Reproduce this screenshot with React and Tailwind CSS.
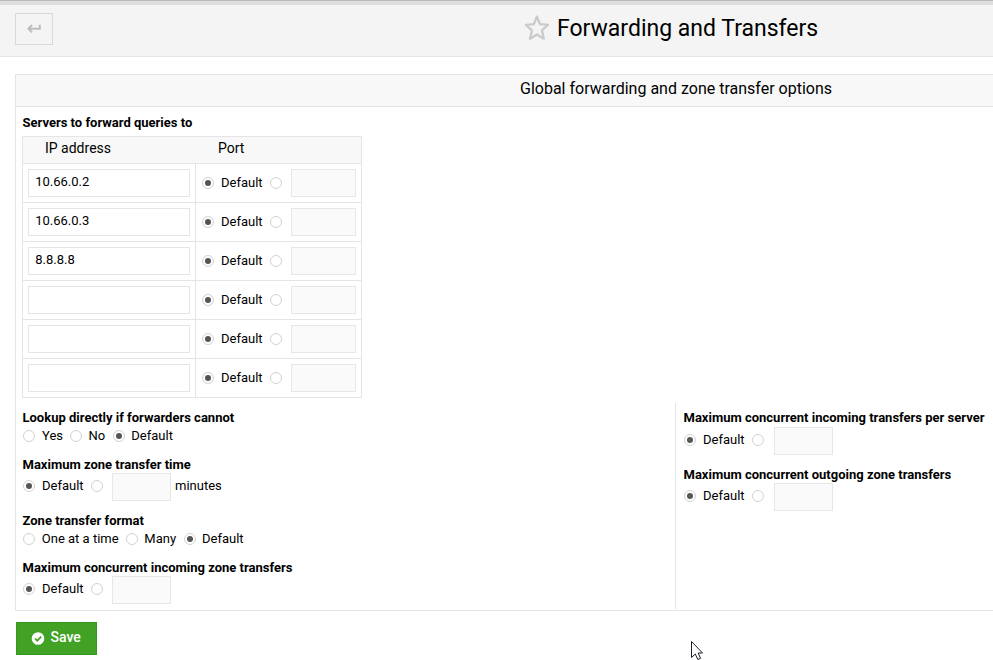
import React from "react";

function Radio({ checked }) {
  return (
    <span className="flex size-3 shrink-0 items-center justify-center rounded-full border border-[#d2d2d2] bg-white">
      {checked && <span className="size-1.5 rounded-full bg-[#555]" />}
    </span>
  );
}

function Option({ checked, label, width, gap = "ml-[7px]" }) {
  return (
    <span className={`flex shrink-0 items-center ${width}`}>
      <Radio checked={checked} />
      <span className={`whitespace-nowrap ${gap}`}>{label}</span>
    </span>
  );
}

function Box({ width }) {
  return <span className={`h-7 shrink-0 border border-[#e7e7e7] bg-[#fafafa] ${width}`} />;
}

function Label({ children }) {
  return <div className="h-[18px] pl-[0.5px] leading-[18px] font-bold whitespace-nowrap">{children}</div>;
}

function DefaultOr({ suffix, gap = "w-[9px]" }) {
  return (
    <div className="flex h-7 items-start pl-px">
      <span className="flex h-[26px] items-center">
        <Option checked label="Default" width="w-[68px]" />
        <Radio />
      </span>
      <span className={gap} />
      <Box width="w-[59px]" />
      {suffix && <span className="ml-1 leading-[26px]">{suffix}</span>}
    </div>
  );
}

const forwarders = ["10.66.0.2", "10.66.0.3", "8.8.8.8", "", "", ""];

export default function App() {
  return (
    <div className="relative h-[660px] w-[993px] overflow-hidden bg-white text-[13px] leading-[18px] text-black [font-family:Roboto,sans-serif]">
      <div className="h-px bg-[#b9b9b9]" />
      <div className="h-1 bg-[#dedede]" />
      <header className="flex h-[52px] border-b border-[#e5e5e5] bg-[#f4f4f4]">
        <button className="mt-2 ml-[15px] flex h-8 w-[38px] items-center justify-center border border-[#d9d9d9]">
          <svg className="-ml-px" width="14" height="10" viewBox="0 0 14 10" fill="none" stroke="#bdbdbd" strokeWidth="2">
            <path d="M5 1 L1.4 4.7 L5 8.4 M1.6 4.7 H12.8 V0.8" />
          </svg>
        </button>
        <div className="ml-[470px] flex">
          <svg className="mt-[9px]" width="28" height="28" viewBox="0 0 28 28" fill="none" stroke="#cacaca" strokeWidth="2.3" strokeLinejoin="round">
            <path d="M13.9 2.6 L17 10.2 L25 10.9 L18.9 16.3 L20.8 24.7 L13.9 20.4 L7 24.7 L8.9 16.3 L2.8 10.9 L10.8 10.2 Z" />
          </svg>
          <h1 className="mt-[10px] ml-[6px] text-[23px] leading-[28px] whitespace-nowrap">Forwarding and Transfers</h1>
        </div>
      </header>

      <main className="mt-[17px] ml-[15px] h-[537px] border-y border-l border-[#e5e5e5]">
        <div className="h-8 border-b border-[#e5e5e5] bg-[#f8f8f8] pt-1 pl-[504px] text-[16px] leading-[20px] whitespace-nowrap">
          Global forwarding and zone transfer options
        </div>
        <div className="pt-[7px] pl-[6px]">
          <Label>Servers to forward queries to</Label>
        </div>
        <div className="mt-1 ml-[6px] w-[340px] border border-[#e5e5e5]">
          <div className="flex h-[26px] bg-[#f8f8f8] text-[14px] leading-[22px]">
            <span className="w-[195px] pl-[22px]">IP address</span>
            <span>Port</span>
          </div>
          {forwarders.map((ip, i) => (
            <div key={i} className="flex h-[39px] border-t border-[#e5e5e5]">
              <div className="w-[173px] border-r border-[#e5e5e5] pt-[5px] pl-[5px]">
                <div className="h-7 w-[162px] border border-[#e5e5e5] bg-white pt-[3px] pl-[6.2px]">{ip}</div>
              </div>
              <div className="flex items-center pl-[6px]">
                <Option checked label="Default" width="w-[68px]" />
                <Radio />
                <span className="w-[9px]" />
                <Box width="w-[65px]" />
              </div>
            </div>
          ))}
        </div>
        <div className="mt-[5px] flex h-[206px]">
          <section className="w-[659px] pt-[6px] pl-[6px]">
            <Label>Lookup directly if forwarders cannot</Label>
            <div className="flex h-[18px] items-center pl-px">
              <Option label="Yes" width="w-[47px]" />
              <Option label="No" width="w-[43px]" gap="ml-[6.5px]" />
              <Option checked label="Default" width="w-[80px]" gap="ml-[6.3px]" />
            </div>
            <div className="mt-[11px] -mb-px"><Label>Maximum zone transfer time</Label></div>
            <DefaultOr suffix="minutes" />
            <div className="mt-[11px]"><Label>Zone transfer format</Label></div>
            <div className="flex h-[18px] items-center pl-px">
              <Option label="One at a time" width="w-[103px]" gap="ml-[6.8px]" />
              <Option label="Many" width="w-[58px]" gap="ml-[6.3px]" />
              <Option checked label="Default" width="w-[80px]" gap="ml-[6px]" />
            </div>
            <div className="mt-[11px] -mb-px"><Label>Maximum concurrent incoming zone transfers</Label></div>
            <DefaultOr />
          </section>
          <section className="w-[318px] border-l border-[#e5e5e5] pt-[6px] pl-[7px]">
            <Label>Maximum concurrent incoming transfers per server</Label>
            <DefaultOr gap="w-[10px]" />
            <div className="mt-[11px] -mb-px"><Label>Maximum concurrent outgoing zone transfers</Label></div>
            <DefaultOr gap="w-[10px]" />
          </section>
        </div>
      </main>

      <button className="mt-[11px] ml-4 flex h-[33px] w-[81px] items-center border border-[#38961e] bg-[#42a225] pl-[14px] text-[14px] leading-[20px] font-medium text-white">
        <svg width="14" height="14" viewBox="0 0 14 14">
          <circle cx="7" cy="6.5" r="6.3" fill="#fff" />
          <path d="M4 6.5 L6.2 8.7 L10.2 4.7" fill="none" stroke="#42a225" strokeWidth="1.7" />
        </svg>
        <span className="-mt-[3px] ml-[5.5px]">Save</span>
      </button>

      <svg className="absolute top-[641px] left-[691px]" width="14" height="20" viewBox="0 0 14 20">
        <path d="M.5.5 V16.5 L4.3 13 L6.8 18.5 L9.5 17.3 L7.2 12 H11.5 Z" fill="#fff" stroke="#1c1c28" />
      </svg>
    </div>
  );
}
